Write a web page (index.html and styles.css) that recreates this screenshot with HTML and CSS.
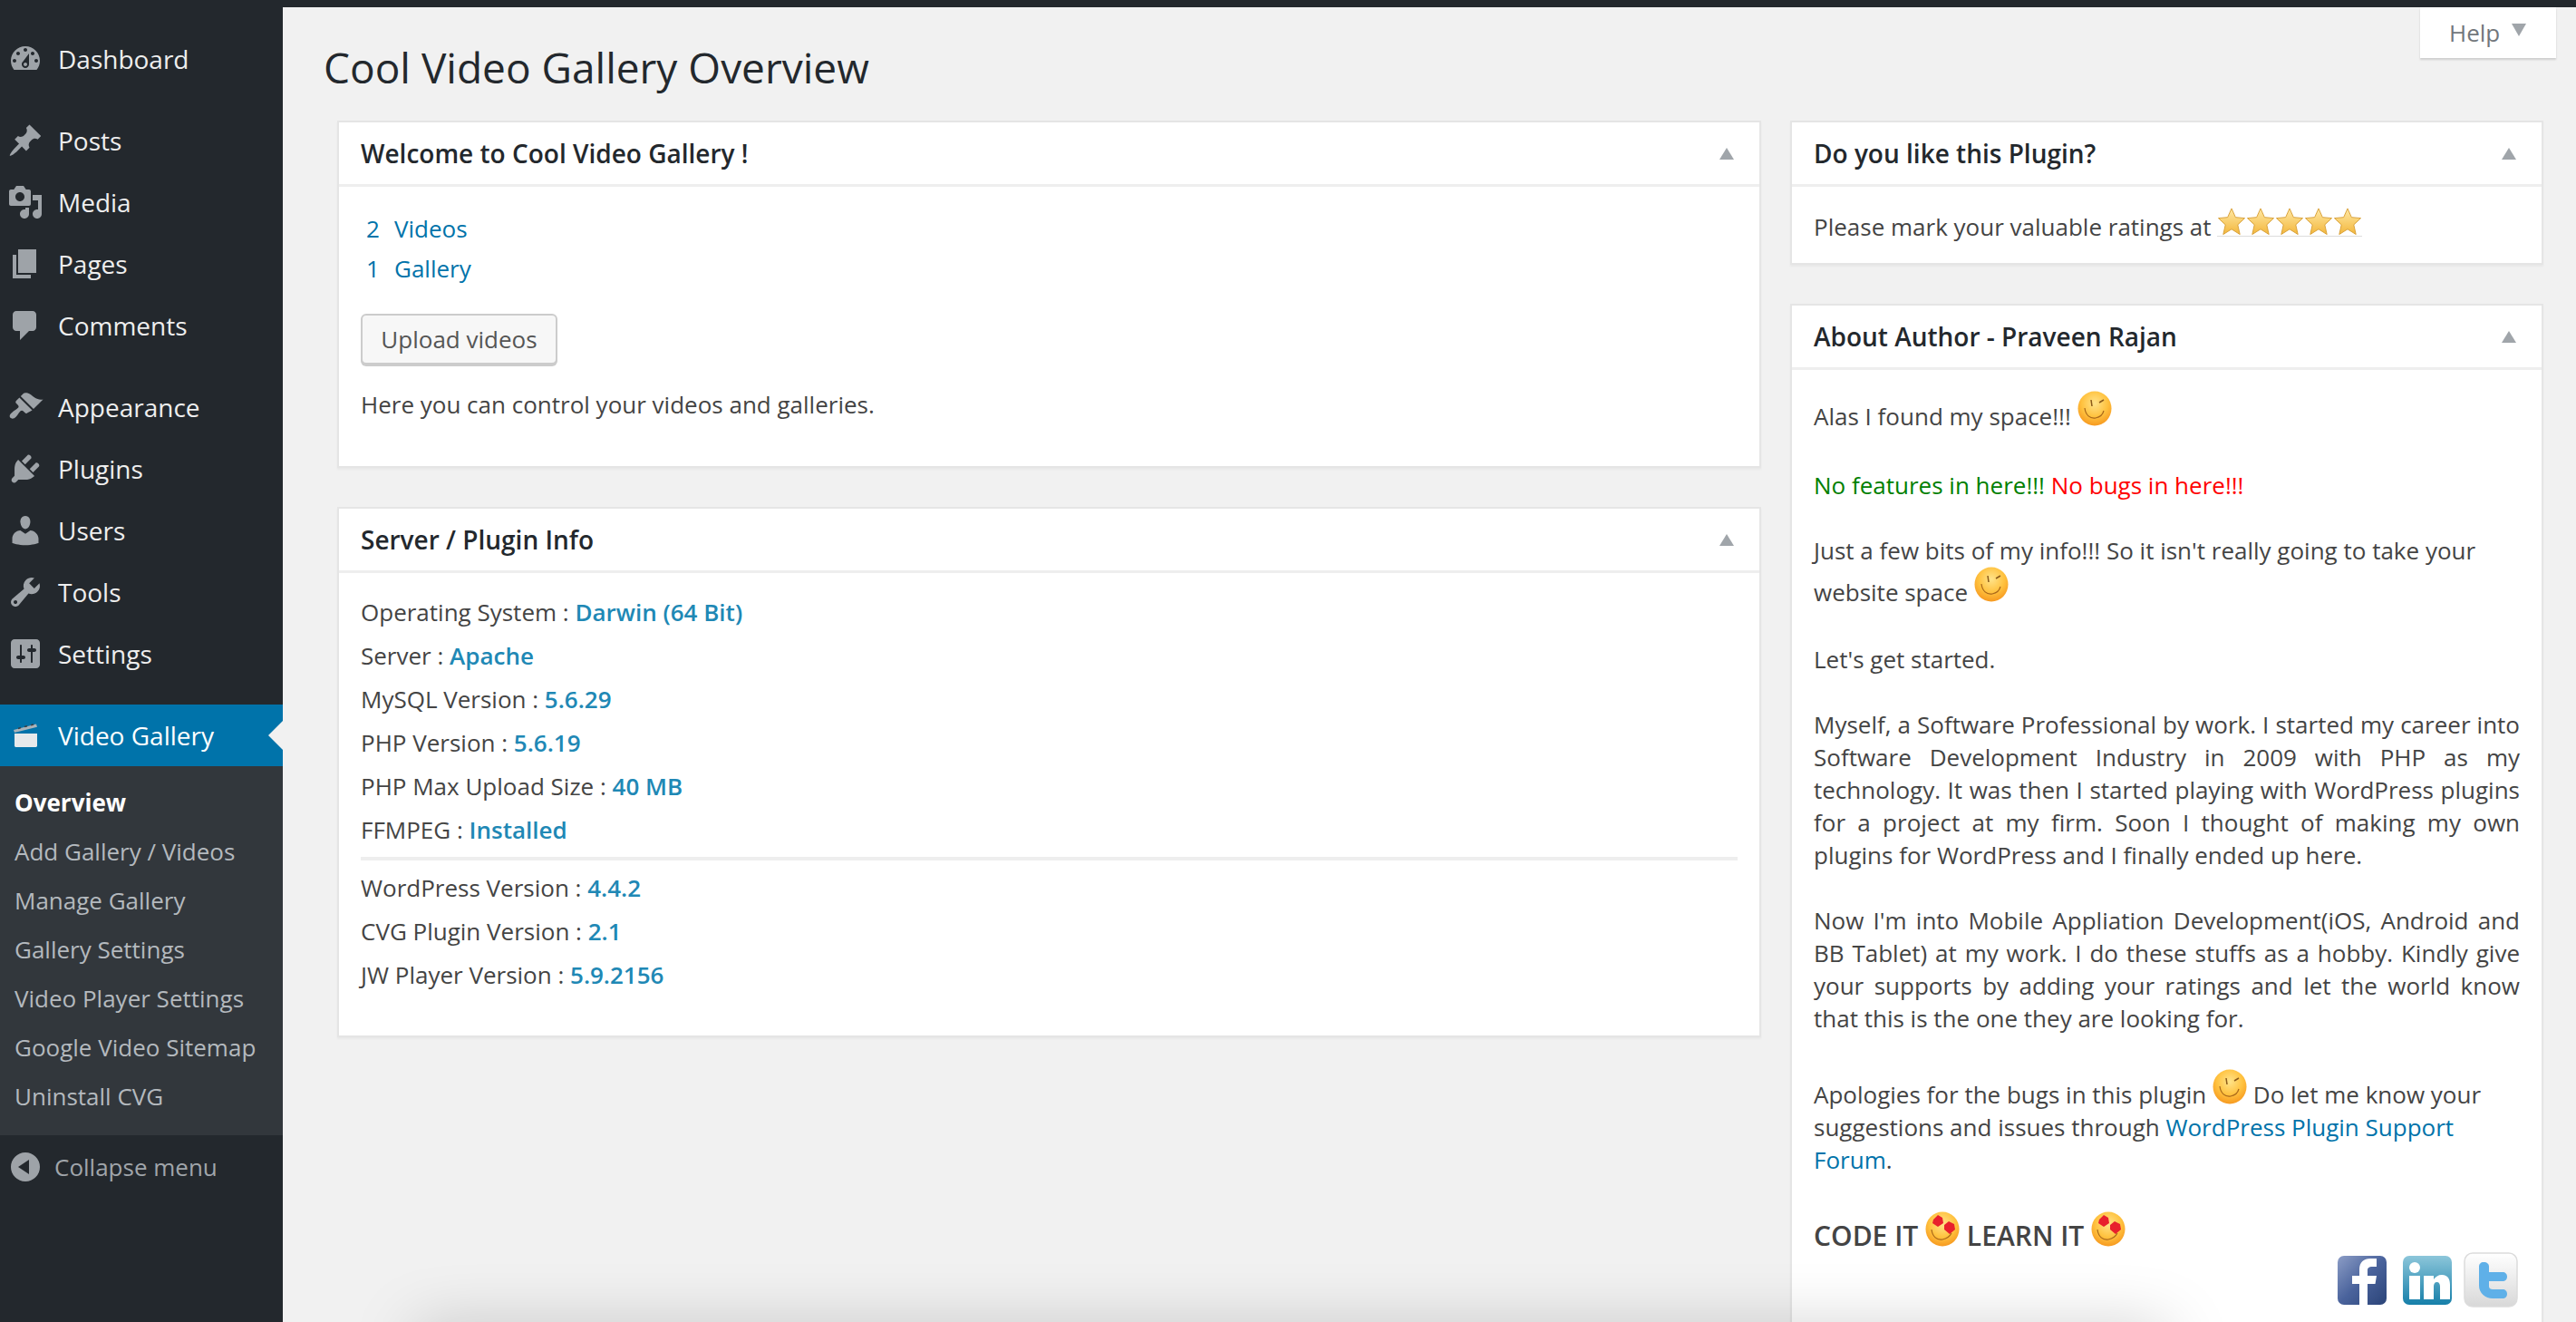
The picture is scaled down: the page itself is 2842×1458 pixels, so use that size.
FILE: index.html
```html
<!DOCTYPE html>
<html lang="en">
<head>
    <meta charset="UTF-8">
    <title>Cool Video Gallery Overview</title>
    <link rel="stylesheet" href="styles.css">
</head>
<body>
    <svg class="defs" width="0" height="0">
        <defs>
            <radialGradient id="faceGrad" cx="50%" cy="35%" r="70%">
                <stop offset="0" stop-color="#ffe38a"/>
                <stop offset="0.55" stop-color="#ffc23f"/>
                <stop offset="1" stop-color="#f5921a"/>
            </radialGradient>
            <linearGradient id="starGrad" x1="0" y1="0" x2="0" y2="1">
                <stop offset="0" stop-color="#ffe9a6"/>
                <stop offset="1" stop-color="#f3b73c"/>
            </linearGradient>
            <linearGradient id="fbGrad" x1="0" y1="0" x2="1" y2="1">
                <stop offset="0" stop-color="#8c9dc6"/>
                <stop offset="0.5" stop-color="#4a639c"/>
                <stop offset="1" stop-color="#2b4478"/>
            </linearGradient>
            <linearGradient id="inGrad" x1="0" y1="0" x2="0" y2="1">
                <stop offset="0" stop-color="#8cc6da"/>
                <stop offset="1" stop-color="#167fa9"/>
            </linearGradient>
            <linearGradient id="twGrad" x1="0" y1="0" x2="0" y2="1">
                <stop offset="0" stop-color="#ffffff"/>
                <stop offset="1" stop-color="#d8d8d8"/>
            </linearGradient>
            <symbol id="wink" viewBox="0 0 38 39">
                <ellipse cx="19" cy="19.500" rx="18.500" ry="19" fill="url(#faceGrad)"/>
                <path d="M8 19c1 8 6 12 12 11 5-1 8-4 9-8" fill="none" stroke="#a8671a" stroke-width="1.200"/>
                <path d="M15 10l1 7M24 13l5-3" fill="none" stroke="#8a5a1a" stroke-width="1.500"/>
            </symbol>
            <symbol id="love" viewBox="0 0 38 39">
                <ellipse cx="19" cy="19.500" rx="18.500" ry="19" fill="url(#faceGrad)"/>
                <path d="M7 20c1 8 6 12 12 11 5-1 8-3 10-7" fill="none" stroke="#a8671a" stroke-width="1.200"/>
                <path d="M9 9l5-5 5 3 1 6-6 4-6-4zM21 15l5-4 6 3 1 6-6 5-6-5z" fill="#e8202c"/>
            </symbol>
            <symbol id="star" viewBox="0 0 32 32">
                <path d="M16 1l4.500 10 10.500 1-8 7.500 2.500 11-9.500-6-9.500 6 2.500-11-8-7.500 10.500-1z" fill="url(#starGrad)" stroke="#d8a038" stroke-width="1"/>
            </symbol>
        </defs>
    </svg>

    <div class="topbar"></div>

    <div class="wrap">
        <div class="sidebar">
            <ul class="menu">
                <li class="menu-item">
                    <svg class="menu-icon" viewBox="0 0 20 20"><path fill-rule="evenodd" d="M3.760 16h12.480c1.100-1.370 1.760-3.110 1.760-5 0-4.420-3.580-8-8-8s-8 3.580-8 8c0 1.890.660 3.630 1.760 5zM10 4c.550 0 1 .450 1 1s-.450 1-1 1-1-.450-1-1 .450-1 1-1zM6 6c.550 0 1 .450 1 1s-.450 1-1 1-1-.450-1-1 .450-1 1-1zm8 0c.550 0 1 .450 1 1s-.450 1-1 1-1-.450-1-1 .450-1 1-1zm-5.370 5.550L12 7v6c0 1.100-.900 2-2 2s-2-.900-2-2c0-.570.240-1.080.630-1.450zM4 10c.550 0 1 .450 1 1s-.450 1-1 1-1-.450-1-1 .450-1 1-1zm12 0c.550 0 1 .450 1 1s-.450 1-1 1-1-.450-1-1 .450-1 1-1zm-5 3c0-.550-.450-1-1-1s-1 .450-1 1 .450 1 1 1 1-.450 1-1z"/></svg>
                    Dashboard
                </li>
                <li class="menu-sep"></li>
                <li class="menu-item">
                    <svg class="menu-icon" viewBox="0 0 20 20"><path d="M10.440 3.020l1.820-1.820 6.360 6.350-1.830 1.820c-1.050-.680-2.480-.570-3.410.360l-.750.750c-.920.930-1.040 2.350-.350 3.410l-1.830 1.820-2.410-2.410-2.800 2.790c-.420.420-3.380 2.710-3.800 2.290s1.860-3.390 2.280-3.810l2.790-2.790L4.100 9.360l1.830-1.820c1.050.690 2.480.570 3.400-.360l.750-.750c.930-.920 1.050-2.350.360-3.410z"/></svg>
                    Posts
                </li>
                <li class="menu-item">
                    <svg class="menu-icon" viewBox="0 0 20 20"><path fill-rule="evenodd" d="M13 11V4c0-.550-.450-1-1-1h-1.670L9 1H5L3.670 3H2c-.550 0-1 .450-1 1v7c0 .550.450 1 1 1h10c.550 0 1-.450 1-1zM7 4.500c1.380 0 2.500 1.120 2.500 2.500S8.380 9.500 7 9.500 4.500 8.380 4.500 7 5.620 4.500 7 4.500zM14 6h5v10.500c0 1.380-1.120 2.500-2.500 2.500S14 17.880 14 16.500s1.120-2.500 2.500-2.500c.170 0 .340.020.500.050V9h-3V6zm-4 8.050V13h2v3.500c0 1.380-1.120 2.500-2.500 2.500S7 17.880 7 16.500 8.120 14 9.500 14c.170 0 .340.020.500.050z"/></svg>
                    Media
                </li>
                <li class="menu-item">
                    <svg class="menu-icon" viewBox="0 0 20 20"><path d="M6 15V2h10v13H6zm-1 1h8v2H3V5h2v11z"/></svg>
                    Pages
                </li>
                <li class="menu-item">
                    <svg class="menu-icon" viewBox="0 0 20 20"><path d="M5 2h9c1.100 0 2 .900 2 2v7c0 1.100-.900 2-2 2h-2l-5 5v-5H5c-1.100 0-2-.900-2-2V4c0-1.100.900-2 2-2z"/></svg>
                    Comments
                </li>
                <li class="menu-sep"></li>
                <li class="menu-item">
                    <svg class="menu-icon" viewBox="0 0 20 20"><path d="M14.480 11.060L7.410 3.990l1.500-1.500c.500-.560 2.300-.470 3.510.320 1.210.800 1.430 1.280 2.910 2.100 1.180.640 2.450 1.260 4.450.850zm-.710.710L6.700 4.700 4.930 6.470c-.390.390-.390 1.020 0 1.410l1.060 1.060c.390.390.390 1.030 0 1.420-.600.600-1.430 1.110-2.210 1.690-.350.260-.700.530-1.010.840C1.430 13.710.960 15.120 1.760 15.920c.800.800 2.210.330 3.030-.590.310-.310.580-.660.840-1.010.580-.780 1.090-1.610 1.690-2.210.390-.390 1.020-.390 1.410 0l1.060 1.060c.390.390 1.020.390 1.410 0z"/></svg>
                    Appearance
                </li>
                <li class="menu-item">
                    <svg class="menu-icon" viewBox="0 0 20 20"><path d="M13.110 4.360L9.870 7.600 8 5.730l3.240-3.240c.350-.340 1.050-.200 1.560.320.520.510.660 1.210.310 1.550zm-8 1.770l.910-1.120 9.010 9.010-1.190.840c-.710.710-2.630 1.160-3.820 1.160H6.140L4.900 17.260c-.590.590-1.540.590-2.120 0-.590-.580-.590-1.530 0-2.120l1.240-1.240v-3.880c0-1.130.400-3.190 1.090-3.890zm7.260 3.970l3.240-3.240c.340-.350 1.040-.210 1.550.310.520.510.660 1.210.31 1.550l-3.240 3.250z"/></svg>
                    Plugins
                </li>
                <li class="menu-item">
                    <svg class="menu-icon" viewBox="0 0 20 20"><path d="M10 9.250c-2.270 0-2.730-3.440-2.730-3.440C7 4.020 7.820 2 9.970 2c2.160 0 2.980 2.020 2.710 3.810 0 0-.410 3.440-2.680 3.440zm0 2.570L12.720 10c2.390 0 4.520 2.330 4.520 4.530v2.490s-3.650 1.130-7.240 1.130c-3.650 0-7.240-1.130-7.240-1.130v-2.490c0-2.250 1.940-4.480 4.470-4.480z"/></svg>
                    Users
                </li>
                <li class="menu-item">
                    <svg class="menu-icon" viewBox="0 0 20 20"><path fill-rule="evenodd" d="M16.680 9.770c-1.340 1.340-3.300 1.670-4.950.990l-5.410 6.520c-.990.990-2.590.990-3.580 0s-.990-2.590 0-3.570l6.520-5.420c-.680-1.650-.350-3.610.990-4.950 1.280-1.280 3.120-1.620 4.720-1.060l-2.890 2.890 2.820 2.820 2.860-2.870c.530 1.580.180 3.390-1.080 4.650zM3.810 16.210c.400.390 1.040.390 1.430 0 .400-.400.400-1.040 0-1.430-.390-.400-1.030-.400-1.430 0-.390.390-.390 1.030 0 1.430z"/></svg>
                    Tools
                </li>
                <li class="menu-item">
                    <svg class="menu-icon" viewBox="0 0 20 20"><path fill-rule="evenodd" d="M18 16V4c0-1.100-.900-2-2-2H4c-1.100 0-2 .900-2 2v12c0 1.100.900 2 2 2h12c1.100 0 2-.900 2-2zM8 11h1c.550 0 1 .450 1 1s-.450 1-1 1H8v1.500c0 .280-.220.500-.500.500s-.500-.220-.500-.500V13H6c-.550 0-1-.450-1-1s.450-1 1-1h1V5.500c0-.280.220-.500.500-.500s.500.220.500.500V11zm5-2h-1c-.550 0-1-.450-1-1s.450-1 1-1h1V5.500c0-.280.220-.500.500-.500s.500.220.500.500V7h1c.550 0 1 .450 1 1s-.450 1-1 1h-1v5.500c0 .280-.220.500-.500.500s-.500-.220-.500-.500V9z"/></svg>
                    Settings
                </li>
                <li class="menu-sep"></li>
                <li class="menu-item current">
                    <svg class="menu-icon" viewBox="0 0 20 20">
                        <path d="M4 9h12.500v6.800c0 .400-.300.700-.700.700H4.700c-.400 0-.700-.300-.700-.700z" fill="#e6e9eb"/>
                        <path d="M3.500 7L16 3.700l.500 1.700L4 8.500z" fill="#aab2b8"/>
                        <path d="M6 6.200l1.500-.400M9.500 5.300l1.500-.400M13 4.400l1.500-.400" stroke="#3a4046" stroke-width=".8"/>
                    </svg>
                    Video Gallery
                </li>
                <li>
                    <ul class="submenu">
                        <li class="active">Overview</li>
                        <li>Add Gallery / Videos</li>
                        <li>Manage Gallery</li>
                        <li>Gallery Settings</li>
                        <li>Video Player Settings</li>
                        <li>Google Video Sitemap</li>
                        <li>Uninstall CVG</li>
                    </ul>
                </li>
                <li class="collapse">
                    <svg class="collapse-icon" viewBox="0 0 32 32"><path fill-rule="evenodd" d="M16 0a16 16 0 1 0 0 32 16 16 0 0 0 0-32zm4 8v16L8 16z"/></svg>
                    Collapse menu
                </li>
            </ul>
        </div>

        <div class="main">
            <div class="help-tab">Help <span class="help-arrow"></span></div>
            <h1>Cool Video Gallery Overview</h1>

            <div class="columns">
                <div class="col-left">
                    <div class="card">
                        <div class="card-head"><h3>Welcome to Cool Video Gallery !</h3><span class="toggle"></span></div>
                        <div class="card-body welcome">
                            <div class="count"><a class="num">2</a><a>Videos</a></div>
                            <div class="count"><a class="num">1</a><a>Gallery</a></div>
                            <button class="btn">Upload videos</button>
                            <p class="welcome-note">Here you can control your videos and galleries.</p>
                        </div>
                    </div>

                    <div class="card">
                        <div class="card-head"><h3>Server / Plugin Info</h3><span class="toggle"></span></div>
                        <div class="card-body info">
                            <div class="info-row">Operating System : <b>Darwin (64 Bit)</b></div>
                            <div class="info-row">Server : <b>Apache</b></div>
                            <div class="info-row">MySQL Version : <b>5.6.29</b></div>
                            <div class="info-row">PHP Version : <b>5.6.19</b></div>
                            <div class="info-row">PHP Max Upload Size : <b>40 MB</b></div>
                            <div class="info-row">FFMPEG : <b>Installed</b></div>
                            <hr class="info-sep">
                            <div class="info-row">WordPress Version : <b>4.4.2</b></div>
                            <div class="info-row">CVG Plugin Version : <b>2.1</b></div>
                            <div class="info-row">JW Player Version : <b>5.9.2156</b></div>
                        </div>
                    </div>
                </div>

                <div class="col-right">
                    <div class="card">
                        <div class="card-head"><h3>Do you like this Plugin?</h3><span class="toggle"></span></div>
                        <div class="card-body rating">
                            Please mark your valuable ratings at
                            <span class="stars">
                                <svg class="star"><use href="#star"/></svg><svg class="star"><use href="#star"/></svg><svg class="star"><use href="#star"/></svg><svg class="star"><use href="#star"/></svg><svg class="star"><use href="#star"/></svg>
                            </span>
                        </div>
                    </div>

                    <div class="card">
                        <div class="card-head"><h3>About Author - Praveen Rajan</h3><span class="toggle"></span></div>
                        <div class="card-body about">
                            <p class="first">Alas I found my space!!! <svg class="emoji"><use href="#wink"/></svg></p>
                            <p class="tight-top"><span class="green">No features in here!!!</span> <span class="red">No bugs in here!!!</span></p>
                            <p>Just a few bits of my info!!! So it isn't really going to take your website space <svg class="emoji"><use href="#wink"/></svg></p>
                            <p class="started">Let's get started.</p>
                            <p class="just">Myself, a Software Professional by work. I started my career into Software Development Industry in 2009 with PHP as my technology. It was then I started playing with WordPress plugins for a project at my firm. Soon I thought of making my own plugins for WordPress and I finally ended up here.</p>
                            <p class="just">Now I'm into Mobile Appliation Development(iOS, Android and BB Tablet) at my work. I do these stuffs as a hobby. Kindly give your supports by adding your ratings and let the world know that this is the one they are looking for.</p>
                            <p class="apologies">Apologies for the bugs in this plugin <svg class="emoji"><use href="#wink"/></svg> Do let me know your suggestions and issues through <a>WordPress Plugin Support Forum</a>.</p>
                            <p class="motto">CODE IT <svg class="emoji"><use href="#love"/></svg> LEARN IT <svg class="emoji"><use href="#love"/></svg></p>
                            <div class="social">
                                <svg class="soc" viewBox="0 0 54 54">
                                    <rect width="54" height="54" rx="7" fill="url(#fbGrad)"/>
                                    <path d="M24 54V31h-8v-9h8v-7c0-8 5-12 12-12h7v9h-5c-3 0-5 1-5 4v6h10l-1.500 9H33v23z" fill="#fff"/>
                                </svg>
                                <svg class="soc" viewBox="0 0 54 54">
                                    <rect width="54" height="54" rx="7" fill="url(#inGrad)"/>
                                    <circle cx="13" cy="13" r="6" fill="#fff"/>
                                    <rect x="7" y="22" width="12" height="26" fill="#fff"/>
                                    <path d="M23 22h11v4c2-3 5-5 9-5 7 0 9 5 9 11v16H41V34c0-3-1-5-3.500-5S34 31 34 34v14H23z" fill="#fff"/>
                                </svg>
                                <svg class="soc soc-tw" viewBox="0 0 60 61">
                                    <rect x="1" y="1" width="58" height="59" rx="9" fill="url(#twGrad)" stroke="#dcdcdc" stroke-width="1.500"/>
                                    <path d="M22 11c4 0 6 2 6 5v6h15c3 0 5 2 5 5s-2 5-5 5H28v6c0 2 2 3 4 3h11c3 0 5 2 5 5s-2 5-5 5H32c-8 0-15-6-15-14V16c0-3 2-5 5-5z" fill="#5fb0e8"/>
                                </svg>
                            </div>
                        </div>
                    </div>
                </div>
            </div>
            <div class="page-shadow"></div>
        </div>
    </div>
</body>
</html>
```

FILE: styles.css
```css
*{
    margin: 0;
    padding: 0;
    box-sizing: border-box;
}
html,body{
    height: 1458px;
    overflow: hidden;
}
body{
    background: #f1f1f1;
    color: #444;
    font: 26px/36px "Open Sans", "Liberation Sans", sans-serif;
}
ul{
    list-style: none;
}
a{
    color: #0073aa;
}
.defs{
    position: absolute;
}
.topbar{
    height: 8px;
    background: #23282d;
}
.wrap{
    display: flex;
    height: 1450px;
}

/* left menu */
.sidebar{
    width: 312px;
    flex: none;
    background: #23282d;
    padding-top: 23px;
}
.menu-item{
    height: 68px;
    display: flex;
    align-items: center;
    gap: 16px;
    padding-left: 8px;
    color: #eee;
    font-size: 28px;
    position: relative;
}
.menu-icon{
    width: 40px;
    height: 40px;
    fill: #9ea3a8;
    flex: none;
}
.menu-sep{
    height: 22px;
}
.current{
    background: #0073aa;
    color: #fff;
}
.current::after{
    content: "";
    position: absolute;
    right: 0;
    top: 18px;
    border: 16px solid transparent;
    border-left: 0;
    border-right-color: #f1f1f1;
}
.submenu{
    background: #32373c;
    padding: 13px 0 16px 16px;
    color: #b4b9be;
}
.submenu li{
    height: 54px;
    line-height: 54px;
    font-size: 26px;
}
.submenu .active{
    color: #fff;
    font-weight: 700;
}
.collapse{
    height: 70px;
    display: flex;
    align-items: center;
    gap: 16px;
    padding-left: 12px;
    color: #a0a5aa;
    font-size: 26px;
}
.collapse-icon{
    width: 32px;
    height: 32px;
    fill: #9ea3a8;
}

/* content */
.main{
    flex: 1;
    position: relative;
    overflow: hidden;
}
h1{
    font-size: 46px;
    font-weight: 400;
    line-height: 62px;
    color: #23282d;
    padding: 35px 0 0 45px;
    height: 125px;
}
.help-tab{
    position: absolute;
    top: 0;
    right: 22px;
    width: 150px;
    height: 56px;
    background: #fff;
    box-shadow: 0 2px 2px rgba(0,0,0,0.15);
    color: #72777c;
    font-size: 26px;
    line-height: 56px;
    padding-left: 32px;
}
.help-arrow{
    display: inline-block;
    border: 8px solid transparent;
    border-top: 14px solid #a0a5aa;
    border-bottom: 0;
    margin-left: 6px;
    vertical-align: 6px;
}
.columns{
    display: flex;
    gap: 32px;
    padding: 0 36px 0 60px;
}
.col-left{
    flex: 1;
}
.col-right{
    width: 831px;
    flex: none;
}
.card{
    background: #fff;
    border: 2px solid #e5e5e5;
    box-shadow: 0 2px 2px rgba(0,0,0,0.04);
    margin-bottom: 43px;
}
.card-head{
    height: 71px;
    border-bottom: 3px solid #eee;
    display: flex;
    align-items: center;
    justify-content: space-between;
    padding: 0 28px 0 24px;
}
.card-head h3{
    font-size: 28px;
    font-weight: 600;
    color: #23282d;
}
.toggle{
    border: 8px solid transparent;
    border-bottom: 13px solid #a0a5aa;
    border-top: 0;
}
.card-body{
    padding: 0 24px;
}

/* welcome box */
.welcome{
    height: 308px;
    padding-top: 24px;
}
.count{
    height: 44px;
    line-height: 44px;
    color: #0073aa;
}
.count .num{
    display: inline-block;
    width: 37px;
    padding-left: 6px;
}
.btn{
    display: block;
    margin-top: 28px;
    width: 217px;
    height: 56px;
    background: #f7f7f7;
    border: 2px solid #ccc;
    border-radius: 6px;
    box-shadow: 0 2px 0 #ccc;
    color: #555;
    font: 26px "Open Sans", sans-serif;
}
.welcome-note{
    margin-top: 26px;
}

/* server info */
.info{
    height: 510px;
    padding-top: 19px;
}
.info-row{
    height: 48px;
    line-height: 48px;
}
.info-row b{
    color: #2088b5;
    font-weight: 600;
}
.info-sep{
    border: 0;
    height: 4px;
    background: #eee;
    margin: 6px 0;
}

/* right column */
.rating{
    height: 84px;
    padding: 19px 24px 15px;
    display: flex;
    align-items: center;
    gap: 6px;
}
.stars{
    display: flex;
    margin-top: -10px;
    border-bottom: 1px solid #ddd;
}
.star{
    width: 32px;
    height: 31px;
}
.about{
    padding-top: 23px;
    padding-bottom: 80px;
}
.about p{
    margin-top: 36px;
}
.about .first{
    margin-top: 0;
}
.about .tight-top{
    margin-top: 40px;
}
.about .started{
    margin-top: 38px;
}
.about .apologies{
    margin-top: 38px;
}
.just{
    text-align: justify;
}
.green{
    color: #008000;
}
.red{
    color: #f00;
}
.emoji{
    width: 38px;
    height: 39px;
    vertical-align: -1px;
}
.about .motto{
    font-size: 30px;
    font-weight: 600;
    margin-top: 39px;
}
.social{
    display: flex;
    justify-content: flex-end;
    align-items: center;
    gap: 18px;
    padding-right: 2px;
}
.soc{
    width: 54px;
    height: 54px;
}
.soc-tw{
    width: 60px;
    height: 61px;
    margin-left: -5px;
}

/* soft shadow along the bottom edge of the capture */
.page-shadow{
    position: absolute;
    left: 148px;
    width: 1930px;
    bottom: -50px;
    height: 40px;
    box-shadow: 0 0 70px rgba(0,0,0,0.25);
    pointer-events: none;
}
```
